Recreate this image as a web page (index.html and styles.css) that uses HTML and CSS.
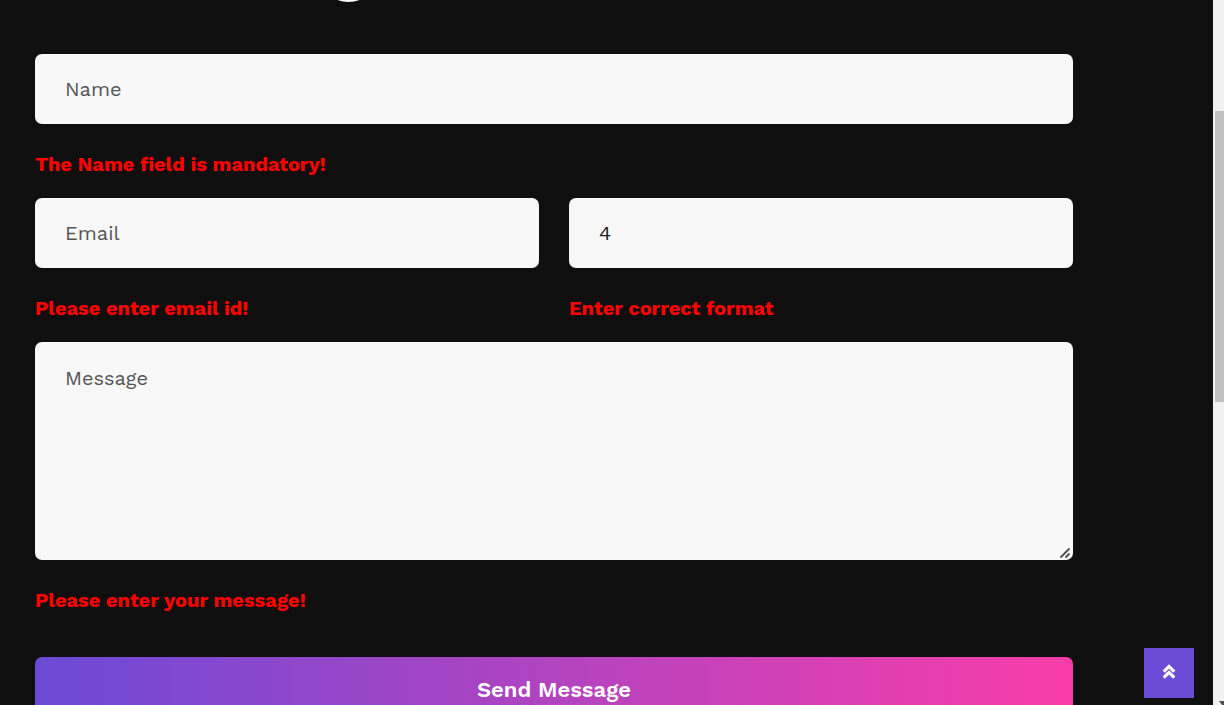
FILE: index.html
```html
<!DOCTYPE html>
<html lang="en">
<head>
<meta charset="utf-8">
<title>Contact</title>
<link rel="stylesheet" href="styles.css">
</head>
<body>
<div class="page">
  <main class="content">
    <span class="heading-tail" aria-hidden="true"></span>
    <form class="contact-form" novalidate>
      <div class="field wide">
        <input class="control" type="text" id="name" placeholder="Name" aria-label="Name" aria-describedby="name-error">
        <p class="error" id="name-error">The Name field is mandatory!</p>
      </div>
      <div class="field">
        <input class="control" type="email" id="email" placeholder="Email" aria-label="Email" aria-describedby="email-error">
        <p class="error" id="email-error">Please enter email id!</p>
      </div>
      <div class="field">
        <input class="control" type="text" id="phone" value="4" aria-label="Phone" aria-describedby="phone-error">
        <p class="error" id="phone-error">Enter correct format</p>
      </div>
      <div class="field wide">
        <div class="message-box">
          <textarea class="control message" id="message" placeholder="Message" aria-label="Message" aria-describedby="message-error"></textarea>
          <svg class="grip" width="12" height="12" viewBox="0 0 12 12" fill="none" stroke="#505050" stroke-width="1.8" aria-hidden="true">
            <path d="M1.500 10.500 10.500 1.500M6.500 10.500l4-4"/>
          </svg>
        </div>
        <p class="error" id="message-error">Please enter your message!</p>
      </div>
      <button class="send wide" type="submit">Send Message</button>
    </form>
    <button class="to-top" type="button" aria-label="Back to top">
      <svg width="14" height="16" viewBox="0 0 14 16" fill="none" stroke="#fff" stroke-width="3.2">
        <path d="M1.700 7.700 7 2.400l5.300 5.300M1.700 13.700 7 8.400l5.300 5.300"/>
      </svg>
    </button>
  </main>
  <div class="scrollbar" aria-hidden="true">
    <div class="thumb"></div>
    <svg class="arrow" width="5" height="4" viewBox="0 0 5 4"><path d="M0 0h5v4H3z" fill="#505050"/></svg>
  </div>
</div>
</body>
</html>
```
FILE: styles.css
```css
* {
  box-sizing: border-box;
}

body {
  margin: 0;
  background: #0f0f0f;
  font-family: "Work Sans", Inter, sans-serif;
}

.page {
  display: flex;
  height: 100vh;
  overflow: hidden;
}

.content {
  position: relative;
  flex: 1;
  padding: 54px 140px 0 35px;
}

.heading-tail {
  position: absolute;
  top: -10px;
  left: 334px;
  width: 29px;
  height: 12px;
  border-radius: 50%;
  background: #fff;
}

.contact-form {
  display: grid;
  grid-template-columns: 1fr 1fr;
  column-gap: 30px;
}

.wide {
  grid-column: 1 / -1;
}

.control {
  display: block;
  width: 100%;
  height: 70px;
  padding: 0 30px;
  border: 0;
  border-radius: 7px;
  background: #f8f8f8;
  color: #222;
  font: 400 20px/30px "Work Sans", Inter, sans-serif;
  outline: 0;
}

.control::placeholder {
  color: #555;
  opacity: 1;
}

.message-box {
  position: relative;
}

.message {
  height: 218px;
  padding: 21px 30px;
  resize: none;
}

.grip {
  position: absolute;
  right: 2px;
  bottom: 1px;
}

.error {
  margin: 0;
  padding: 25px 0 19px;
  color: #f00;
  font-size: 20px;
  font-weight: 700;
  line-height: 30px;
}

.send {
  height: 66px;
  margin-top: 23px;
  border: 0;
  border-radius: 7px;
  background: linear-gradient(90deg, #6b4ad6, #f93da9);
  color: #fff;
  font: 600 22px/30px "Work Sans", Inter, sans-serif;
}

.to-top {
  position: absolute;
  right: 19px;
  bottom: 7px;
  display: flex;
  align-items: center;
  justify-content: center;
  width: 50px;
  height: 50px;
  padding: 0 0 2px;
  border: 0;
  background: #6b4ad6;
}

.scrollbar {
  position: relative;
  width: 11px;
  padding: 111px 0 0 2px;
  background: #f1f1f1;
}

.thumb {
  height: 291px;
  background: #c1c1c1;
}

.arrow {
  position: absolute;
  right: 0;
  bottom: 0;
}
```
